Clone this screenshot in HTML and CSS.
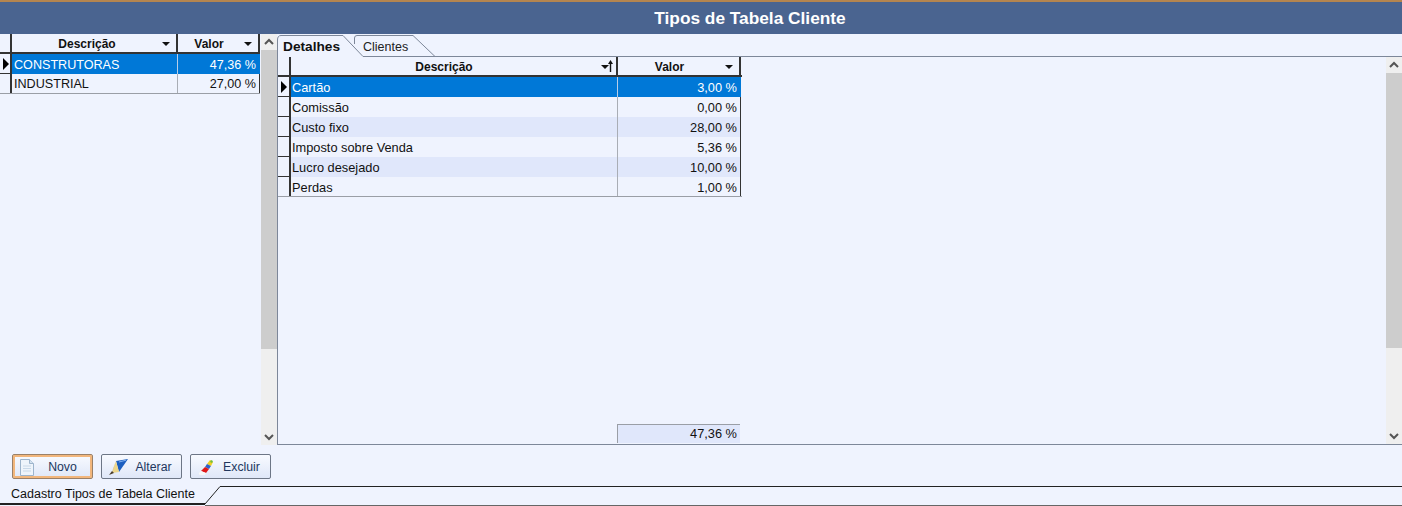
FILE: index.html
```html
<!DOCTYPE html>
<html lang="pt">
<head>
<meta charset="utf-8">
<title>Tipos de Tabela Cliente</title>
<link rel="stylesheet" href="styles.css">
</head>
<body>
<header class="title">Tipos de Tabela Cliente</header>
<main class="main">
  <section class="left">
    <div class="grid-left">
      <div class="row head">
        <div class="ind"></div>
        <div class="hcell c1">Descrição<span class="drop"></span></div>
        <div class="hcell c2">Valor<span class="drop"></span></div>
      </div>
      <div class="row sel">
        <div class="ind"><span class="arrow"></span></div>
        <div class="cell c1">CONSTRUTORAS</div>
        <div class="cell c2 num">47,36 %</div>
      </div>
      <div class="row last">
        <div class="ind"></div>
        <div class="cell c1">INDUSTRIAL</div>
        <div class="cell c2 num">27,00 %</div>
      </div>
    </div>
  </section>
  <div class="sbar left-sbar">
    <svg class="chev" width="16" height="16" viewBox="0 0 16 16"><path d="M4 10 8 6l4 4" fill="none" stroke="#555" stroke-width="2"/></svg>
    <div class="thumb thumb-left"></div>
    <div class="track"></div>
    <svg class="chev" width="16" height="16" viewBox="0 0 16 16"><path d="M4 6l4 4 4-4" fill="none" stroke="#555" stroke-width="2"/></svg>
  </div>
  <section class="right">
    <div class="tabs">
      <div class="tab active">Detalhes</div>
      <div class="tab other">Clientes</div>
      <svg class="tab-lines" width="160" height="23" viewBox="0 0 160 23"><path d="M0.5 22V6Q0.5 1.500 4 1.500H66L86 22.500H158M77.500 10V4Q77.500 1.500 80 1.500H136L158 22.500" fill="none" stroke="#7d8799"/></svg>
    </div>
    <div class="panel">
      <div class="detail">
        <div class="grid-right">
          <div class="row head">
            <div class="ind"></div>
            <div class="hcell d1">Descrição<span class="drop"></span><svg class="sort" width="5" height="12" viewBox="0 0 5 12"><path d="M2.500 0 5 4H3.200V12H1.800V4H0z" fill="#111"/></svg></div>
            <div class="hcell d2">Valor<span class="drop"></span></div>
          </div>
          <div class="row sel"><div class="ind"><span class="arrow"></span></div><div class="cell d1">Cartão</div><div class="cell d2 num">3,00 %</div></div>
          <div class="row"><div class="ind"></div><div class="cell d1">Comissão</div><div class="cell d2 num">0,00 %</div></div>
          <div class="row alt"><div class="ind"></div><div class="cell d1">Custo fixo</div><div class="cell d2 num">28,00 %</div></div>
          <div class="row"><div class="ind"></div><div class="cell d1">Imposto sobre Venda</div><div class="cell d2 num">5,36 %</div></div>
          <div class="row alt"><div class="ind"></div><div class="cell d1">Lucro desejado</div><div class="cell d2 num">10,00 %</div></div>
          <div class="row last"><div class="ind"></div><div class="cell d1">Perdas</div><div class="cell d2 num">1,00 %</div></div>
        </div>
        <div class="total-row"><div class="total">47,36 %</div></div>
      </div>
      <div class="sbar right-sbar">
        <svg class="chev" width="16" height="16" viewBox="0 0 16 16"><path d="M4 10 8 6l4 4" fill="none" stroke="#555" stroke-width="2"/></svg>
        <div class="thumb thumb-right"></div>
        <div class="track"></div>
        <svg class="chev" width="16" height="16" viewBox="0 0 16 16"><path d="M4 6l4 4 4-4" fill="none" stroke="#555" stroke-width="2"/></svg>
      </div>
    </div>
  </section>
</main>
<div class="actions">
  <button class="btn focus">
    <svg class="ico" width="20" height="20" viewBox="0 0 20 20"><path d="M2.500 2.500h9l4 4v12h-13z" fill="#eef4fb" stroke="#9db4cc"/><path d="M11.500 2.500v4h4" fill="#d4e2f0" stroke="#9db4cc"/><path d="M5 9h8M5 11.500h8M5 14h8" stroke="#c8d8e8"/></svg>
    <span>Novo</span>
  </button>
  <button class="btn">
    <svg class="ico" width="24" height="20" viewBox="0 0 24 20"><path d="M9 4 21 2 12 15z" fill="#1c5fc0"/><path d="M12 5 19 3.200" stroke="#7db0f0"/><path d="M9 4l3 11-7 1z" fill="#ecd68a"/><path d="M9 4l-3 8-1 4z" fill="#c9a94e"/><path d="M5 14l2 2-5 2z" fill="#4a3d28"/></svg>
    <span>Alterar</span>
  </button>
  <button class="btn">
    <svg class="ico" width="22" height="20" viewBox="0 0 22 20"><path d="M14 3l3 2-2 4-4-2z" fill="#f0d020"/><path d="M15 3l2 1-1 2-2-1z" fill="#6fbf40"/><path d="M11 7l4 2-2 3-4-2z" fill="#2f62c8"/><path d="M9 10l4 2-3 4-5-2z" fill="#e01818"/><path d="M5 14l5 2-1 2H4q-2-1-1-2z" fill="#f7f7f7"/></svg>
    <span>Excluir</span>
  </button>
</div>
<footer class="bottom">
  <div class="bottom-tab">Cadastro Tipos de Tabela Cliente</div>
  <svg class="bottom-slant" width="16" height="20" viewBox="0 0 16 20"><path d="M0 18 15 0.500H16" fill="none" stroke="#222"/><path d="M0 19.500H16" stroke="#666"/></svg>
  <div class="bottom-fill"></div>
</footer>
</body>
</html>
```
FILE: styles.css
```css
* { box-sizing: border-box; }
html, body { margin: 0; padding: 0; }
body {
  width: 1402px; height: 506px; overflow: hidden;
  display: flex; flex-direction: column;
  background: #eff3fe;
  font: 12.8px "Liberation Sans", Arial, sans-serif;
  color: #111;
}
.title {
  height: 34px; flex: none;
  background: #4a6490;
  border-top: 2px solid #b5854f;
  color: #fff; font-weight: bold; font-size: 17.300px;
  display: flex; align-items: center; justify-content: center;
  padding-left: 98px;
}
.main { height: 411px; flex: none; display: flex; }
.left { width: 260px; flex: none; }
.grid-left { width: 260px; font-size: 12.600px; }
.row { display: flex; height: 20px; }
.head { background: #eff3fe; border-bottom: 2px solid #333; font-weight: bold; font-size: 12px; height: 20px; }
.ind {
  width: 12px; flex: none; border-right: 2px solid #333;
  border-bottom: 1px solid #333; display: flex; align-items: center;
}
.head .ind { border-bottom: 0; }
.grid-right .ind { width: 13px; }
.hcell {
  position: relative; display: flex; align-items: center; justify-content: center;
  border-right: 2px solid #333; padding-right: 14px; padding-top: 1px;
}
.cell {
  display: flex; align-items: center; padding: 0 2px;
  border-right: 1px solid #a9adb5; white-space: nowrap;
}
.grid-left .cell { padding-top: 1px; }
.grid-right .last .cell { padding-top: 1px; }
.num { justify-content: flex-end; padding-right: 3px; }
.c1 { width: 166px; }
.c2 { width: 82px; }
.d1 { width: 327px; }
.d2 { width: 123px; }
.hcell.c2 { padding-right: 18px; }
.hcell.d1 { padding-right: 19px; padding-top: 2px; }
.hcell.d2 { padding-right: 18px; padding-top: 2px; }
.cell.d1 { padding-left: 1px; }
.c2, .d2 { border-right-color: #333; }
.sel .cell { background: #0078d7; color: #fff; border-right: 1px solid #0078d7; }
.sel .c1, .sel .d1 { border-right: 1px solid #b8cde8; }
.alt .cell { background: #e0e7fb; }
.last { border-bottom: 1px solid #9a9ea6; }
.last .ind { border-bottom: 0; }
.drop {
  position: absolute; right: 6px; top: 8px; width: 0; height: 0;
  border: 4px solid transparent; border-top: 4px solid #111; border-bottom: 0;
}
.d1 .drop { right: 7px; top: 8px; }
.sort { position: absolute; right: 3px; top: 3px; }
.arrow {
  width: 0; height: 0; margin-left: 3px;
  border: 6px solid transparent; border-left: 6px solid #000; border-right: 0;
}
.sbar { width: 16px; flex: none; display: flex; flex-direction: column; background: #efefef; }
.left-sbar { margin-left: 1px; }
.chev { flex: none; display: block; }
.thumb { background: #cdcdcd; flex: none; }
.track { flex: 1; }
.thumb-left { height: 299px; }
.thumb-right { height: 275px; }
.right { flex: 1; display: flex; flex-direction: column; min-width: 0; }
.tabs { height: 22px; flex: none; position: relative; display: flex; align-items: flex-end; padding-left: 6px; z-index: 1; }
.tab { height: 22px; display: flex; align-items: center; padding-top: 2px; }
.tab.active { font-weight: bold; font-size: 13.700px; color: #111; width: 80px; }
.tab.other { width: 60px; color: #222; font-size: 12.500px; padding-top: 3px; }
.tab-lines { position: absolute; left: 0; top: 0; }
.panel {
  flex: 1; display: flex; min-height: 0; position: relative;
  border-top: 1px solid #7d8799; border-left: 1px solid #7d8799; border-bottom: 1px solid #7d8799;
}
.panel::before {
  content: ""; position: absolute; left: 0; top: -1px; width: 85px; height: 1px; background: #eff3fe;
}
.detail { flex: 1; display: flex; flex-direction: column; justify-content: space-between; }
.grid-right { width: 464px; }
.total-row { padding-left: 339px; padding-bottom: 1px; }
.total {
  width: 123px; height: 19px; background: #e0e7fb; text-align: right;
  border-top: 1px solid #9a9ea6; border-left: 1px solid #9a9ea6;
  padding-right: 3px; line-height: 18px;
}
.actions { height: 41px; flex: none; display: flex; gap: 8px; padding: 9px 0 0 12px; }
.btn {
  width: 81px; height: 25px; padding: 0 5px 0 5px; display: flex; align-items: center;
  font: 12.300px "Liberation Sans", Arial, sans-serif; color: #22375e;
  background: linear-gradient(#f8faff, #dfe7f8);
  border: 1px solid #6d7686; border-radius: 2px;
}
.btn span { flex: 1; text-align: center; }
.btn.focus { border-color: #9a8068; box-shadow: inset 0 0 0 2px #f2b67c; }
.ico { flex: none; }
.bottom { height: 20px; flex: none; display: flex; }
.bottom-tab {
  width: 205px; height: 19px; padding: 1px 0 0 11px; border-bottom: 2px solid #222; color: #111; font-size: 12.500px;
}
.bottom-slant { flex: none; }
.bottom-fill { flex: 1; height: 20px; border-top: 1px solid #222; border-bottom: 1px solid #666; }
```
